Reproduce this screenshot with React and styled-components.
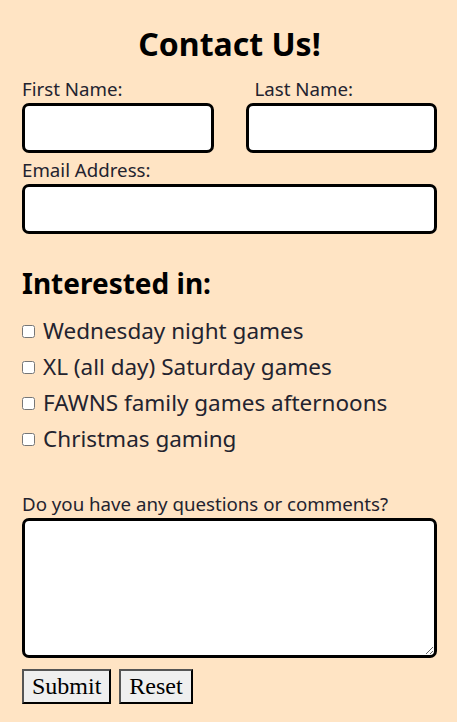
import React from "react";
import styled, { createGlobalStyle } from "styled-components";

const GlobalStyle = createGlobalStyle`
	body {
		margin: 0;
		background: #ffe4c4;
		font-family: "Noto Sans", sans-serif;
		color: #23232f;
	}
`;

const interests = [
	"Wednesday night games",
	"XL (all day) Saturday games",
	"FAWNS family games afternoons",
	"Christmas gaming",
];

const App = () => {
	return (
		<>
			<GlobalStyle />
			<Form onSubmit={(e) => e.preventDefault()}>
				<Title>Contact Us!</Title>
				<NameRow>
					<Field>
						<Label htmlFor="first">First Name:</Label>
						<Input id="first" type="text" />
					</Field>
					<Field>
						<Label htmlFor="last" $indent>
							Last Name:
						</Label>
						<Input id="last" type="text" />
					</Field>
				</NameRow>
				<Field>
					<Label htmlFor="email">Email Address:</Label>
					<Input id="email" type="email" />
				</Field>
				<SubTitle>Interested in:</SubTitle>
				<CheckList>
					{interests.map((item) => (
						<CheckRow key={item}>
							<input type="checkbox" />
							{item}
						</CheckRow>
					))}
				</CheckList>
				<Field>
					<Label htmlFor="comments">Do you have any questions or comments?</Label>
					<TextArea id="comments" />
				</Field>
				<Buttons>
					<Button type="submit">Submit</Button>
					<Button type="reset">Reset</Button>
				</Buttons>
			</Form>
		</>
	);
};

export default App;

const Form = styled.form`
	display: flex;
	flex-direction: column;
	padding: 24px 20px 18px 22px;
`;

const Title = styled.h1`
	margin: 0 0 12px;
	text-align: center;
	font-size: 32px;
	font-weight: bold;
	line-height: 40px;
	color: #000;
`;

const NameRow = styled.div`
	display: grid;
	grid-template-columns: 1fr 1fr;
	column-gap: 32px;
`;

const Field = styled.div`
	display: flex;
	flex-direction: column;
`;

const Label = styled.label`
	margin-bottom: 1px;
	font-size: 18.7px;
	line-height: 26px;
	padding-left: ${(p) => (p.$indent ? "9px" : "0")};
`;

const Input = styled.input`
	box-sizing: border-box;
	width: 100%;
	height: 50px;
	margin: 0 0 4px;
	border: 3px solid #000;
	border-radius: 7px;
	background: #fff;
	font-size: 18px;
`;

const SubTitle = styled.h2`
	margin: 28px 0 13px;
	font-size: 28px;
	font-weight: bold;
	line-height: 34px;
	color: #000;
`;

const CheckList = styled.div`
	display: flex;
	flex-direction: column;
	margin-bottom: 34px;
`;

const CheckRow = styled.label`
	display: flex;
	align-items: center;
	gap: 8px;
	font-size: 22.5px;
	line-height: 36px;

	input {
		margin: 0;
		width: 13px;
		height: 13px;
	}
`;

const TextArea = styled.textarea`
	box-sizing: border-box;
	width: 100%;
	height: 140px;
	margin: 0 0 11px;
	border: 3px solid #000;
	border-radius: 7px;
	background: #fff;
	resize: both;
`;

const Buttons = styled.div`
	display: flex;
	gap: 8px;
`;

const Button = styled.button`
	box-sizing: border-box;
	height: 35px;
	padding: 0 8px;
	border: 2px outset #555;
	background: #efefef;
	font-family: "Liberation Serif", serif;
	font-size: 24px;
	color: #000;
`;
